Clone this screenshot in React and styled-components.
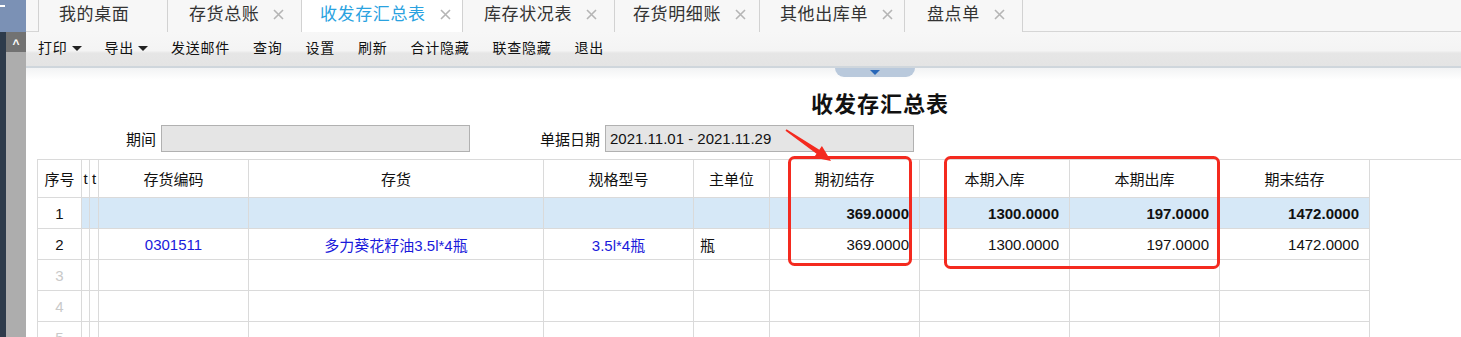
import React from 'react';
import styled, { createGlobalStyle } from 'styled-components';

const GlobalStyle = createGlobalStyle`
  html, body {
    margin: 0;
    padding: 0;
    overflow: hidden;
    background: #fff;
  }
  body {
    font-family: "Liberation Sans", "Noto Sans CJK SC", sans-serif;
    color: #111;
  }
`;

const Page = styled.div`
  position: relative;
  display: flex;
  width: 1461px;
  height: 337px;
  overflow: hidden;
`;

const Sidebar = styled.aside`
  width: 26px;
  flex: none;
  display: flex;
  flex-direction: column;
`;

const SideTop = styled.div`
  height: 32px;
  flex: none;
  background: #7b91b5;
  padding-top: 5px;
  box-sizing: border-box;
`;

const SideDash = styled.span`
  display: block;
  width: 5px;
  height: 2px;
  background: #fff;
`;

const SideBody = styled.div`
  flex: 1;
  display: flex;
`;

const SideStrip = styled.div`
  width: 6px;
  background: #2e3b4b;
`;

const SideScroll = styled.div`
  flex: 1;
  background: #adadad;
`;

const ScrollUp = styled.div`
  height: 20px;
  background: #727272;
  color: #fff;
  font-size: 12px;
  font-weight: bold;
  display: flex;
  align-items: center;
  justify-content: center;
  line-height: 1;
  padding-top: 3px;
  box-sizing: border-box;
`;

const Main = styled.div`
  flex: 1;
  min-width: 0;
  display: flex;
  flex-direction: column;
  & > * {
    flex-shrink: 0;
  }
`;

const TabBar = styled.nav`
  height: 32px;
  box-sizing: border-box;
  display: flex;
  padding-left: 12px;
  background: #f7f7f7;
  border-bottom: 1px solid #d6d6d6;
`;

const Tab = styled.div`
  width: ${(p) => p.$w}px;
  height: 32px;
  box-sizing: border-box;
  flex: none;
  display: flex;
  align-items: center;
  gap: 14px;
  padding: 0 0 4px ${(p) => p.$pad}px;
  border-right: 1px solid #d2d2d2;
  background: ${(p) => (p.$active ? '#fff' : '#f7f7f7')};
  color: ${(p) => (p.$active ? '#2aa2df' : '#333')};
  font-size: 17px;
  letter-spacing: 0.6px;
  line-height: 1;
  &:first-child {
    border-left: 1px solid #d2d2d2;
  }
`;

const Close = () => (
  <svg width="11" height="11" viewBox="0 0 11 11">
    <path d="M1 1L10 10M10 1L1 10" stroke="#b5b5b5" strokeWidth="1.6" />
  </svg>
);

const Toolbar = styled.div`
  height: 36px;
  box-sizing: border-box;
  display: flex;
  align-items: center;
  gap: 23px;
  padding: 0 0 2px 12px;
  background: linear-gradient(#f7f7f7 0%, #f4f4f4 55%, #e6e6e6 62%, #e4e4e4 100%);
  border-bottom: 2px solid #cfd6dc;
`;

const ToolItem = styled.span`
  display: flex;
  align-items: center;
  font-size: 14px;
  letter-spacing: 0.75px;
  line-height: 1;
  color: #111;
`;

const Caret = styled.i`
  display: inline-block;
  margin-left: 4px;
  border-left: 5px solid transparent;
  border-right: 5px solid transparent;
  border-top: 5px solid #222;
`;

const Strip = styled.div`
  height: 12px;
  display: flex;
  padding-left: 809px;
  background: linear-gradient(#f2f3f4, #fff);
`;

const Collapse = styled.div`
  width: 80px;
  height: 9px;
  background: #b9c9dc;
  border-radius: 0 0 10px 10px;
  display: flex;
  justify-content: center;
  padding-top: 2px;
  box-sizing: border-box;
  &::after {
    content: '';
    border-left: 5px solid transparent;
    border-right: 5px solid transparent;
    border-top: 5px solid #2867b8;
  }
`;

const Title = styled.h1`
  margin: 0;
  height: 40px;
  display: flex;
  align-items: center;
  padding-left: 785px;
  padding-top: 4px;
  box-sizing: border-box;
  font-size: 22px;
  font-weight: bold;
  letter-spacing: 1px;
  color: #111;
`;

const FilterRow = styled.div`
  display: flex;
  align-items: center;
  gap: 70px;
  height: 27px;
  margin-top: 5px;
  padding-left: 100px;
`;

const Field = styled.label`
  display: flex;
  align-items: center;
  gap: 5px;
  font-size: 15px;
  color: #111;
`;

const FieldBox = styled.input`
  width: 309px;
  height: 27px;
  box-sizing: border-box;
  margin: 0;
  padding: 0 0 0 4px;
  background: #e5e5e5;
  border: 1px solid #b1b1b1;
  font-family: "Liberation Sans", sans-serif;
  font-size: 15px;
  color: #111;
  outline: none;
`;

const TableWrap = styled.div`
  margin: 7px 0 0 11px;
  border-top: 1px solid #dadada;
`;

const Grid = styled.table`
  border-collapse: collapse;
  table-layout: fixed;
  width: 1332px;
`;

const Th = styled.th`
  height: 37px;
  padding: 0;
  border: 1px solid #dadada;
  border-top: none;
  font-size: 15px;
  font-weight: normal;
  color: #111;
  text-align: center;
  white-space: nowrap;
  overflow: hidden;
`;

const Td = styled.td`
  height: 30px;
  padding: ${(p) => (p.$align === 'left' ? '0 0 0 6px' : p.$align === 'right' ? '0 10px 0 0' : '0')};
  border: 1px solid #dadada;
  font-size: 15px;
  text-align: ${(p) => p.$align || 'center'};
  font-weight: ${(p) => (p.$bold ? 'bold' : 'normal')};
  color: ${(p) => (p.$tone === 'link' ? '#1a1adb' : p.$tone === 'muted' ? '#c9c9c9' : '#111')};
  background: ${(p) => (p.$hl ? '#d6e8f7' : '#fff')};
  white-space: nowrap;
  overflow: hidden;
`;

const Overlay = styled.svg`
  position: absolute;
  left: 0;
  top: 0;
  pointer-events: none;
`;

const tabs = [
  { label: '我的桌面', w: 130, pad: 20 },
  { label: '存货总账', w: 134, pad: 21, close: true },
  { label: '收发存汇总表', w: 161, pad: 18, close: true, active: true },
  { label: '库存状况表', w: 152, pad: 21, close: true },
  { label: '存货明细账', w: 145, pad: 18, close: true },
  { label: '其他出库单', w: 145, pad: 20, close: true },
  { label: '盘点单', w: 118, pad: 22, close: true },
];

const tools = [
  { label: '打印', caret: true },
  { label: '导出', caret: true },
  { label: '发送邮件' },
  { label: '查询' },
  { label: '设置' },
  { label: '刷新' },
  { label: '合计隐藏' },
  { label: '联查隐藏' },
  { label: '退出' },
];

const widths = [44, 8, 9, 150, 295, 150, 76, 150, 150, 150, 150];
const headers = ['序号', 't', 't', '存货编码', '存货', '规格型号', '主单位', '期初结存', '本期入库', '本期出库', '期末结存'];

const rows = [
  { no: '1', total: true, values: ['369.0000', '1300.0000', '197.0000', '1472.0000'] },
  {
    no: '2',
    code: '0301511',
    name: '多力葵花籽油3.5l*4瓶',
    spec: '3.5l*4瓶',
    unit: '瓶',
    values: ['369.0000', '1300.0000', '197.0000', '1472.0000'],
  },
  { no: '3', muted: true, values: ['', '', '', ''] },
  { no: '4', muted: true, values: ['', '', '', ''] },
  { no: '5', muted: true, values: ['', '', '', ''] },
];

export default function App() {
  return (
    <Page>
      <GlobalStyle />
      <Sidebar>
        <SideTop>
          <SideDash />
        </SideTop>
        <SideBody>
          <SideStrip />
          <SideScroll>
            <ScrollUp>^</ScrollUp>
          </SideScroll>
        </SideBody>
      </Sidebar>

      <Main>
        <TabBar>
          {tabs.map((t) => (
            <Tab key={t.label} $w={t.w} $pad={t.pad} $active={t.active}>
              <span>{t.label}</span>
              {t.close && <Close />}
            </Tab>
          ))}
        </TabBar>

        <Toolbar>
          {tools.map((t) => (
            <ToolItem key={t.label}>
              {t.label}
              {t.caret && <Caret />}
            </ToolItem>
          ))}
        </Toolbar>

        <Strip>
          <Collapse />
        </Strip>

        <Title>收发存汇总表</Title>

        <FilterRow>
          <Field>
            期间
            <FieldBox readOnly value="" />
          </Field>
          <Field>
            单据日期
            <FieldBox readOnly value="2021.11.01 - 2021.11.29" />
          </Field>
        </FilterRow>

        <TableWrap>
          <Grid>
            <colgroup>
              {widths.map((w, i) => (
                <col key={i} style={{ width: w }} />
              ))}
            </colgroup>
            <thead>
              <tr>
                {headers.map((h, i) => (
                  <Th key={i}>{h}</Th>
                ))}
              </tr>
            </thead>
            <tbody>
              {rows.map((r) => (
                <tr key={r.no}>
                  <Td $tone={r.muted ? 'muted' : undefined}>{r.no}</Td>
                  <Td $hl={r.total} />
                  <Td $hl={r.total} />
                  <Td $hl={r.total} $tone="link">{r.code}</Td>
                  <Td $hl={r.total} $tone="link">{r.name}</Td>
                  <Td $hl={r.total} $tone="link">{r.spec}</Td>
                  <Td $hl={r.total} $align="left">{r.unit}</Td>
                  {r.values.map((v, i) => (
                    <Td key={i} $hl={r.total} $bold={r.total} $align="right">
                      {v}
                    </Td>
                  ))}
                </tr>
              ))}
            </tbody>
          </Grid>
        </TableWrap>
      </Main>

      <Overlay width="1461" height="337" viewBox="0 0 1461 337">
        <rect x="789.5" y="157.5" width="121" height="107" rx="5" fill="none" stroke="#f42a1f" strokeWidth="3" />
        <rect x="945.5" y="157.5" width="273" height="110" rx="5" fill="none" stroke="#f42a1f" strokeWidth="3" />
        <polygon
          points="786.5,129.3 819.3,149.7 821.9,146.1 831,161 813.9,157.5 816.5,153.8 785.5,130.7"
          fill="#f42a1f"
        />
      </Overlay>
    </Page>
  );
}
